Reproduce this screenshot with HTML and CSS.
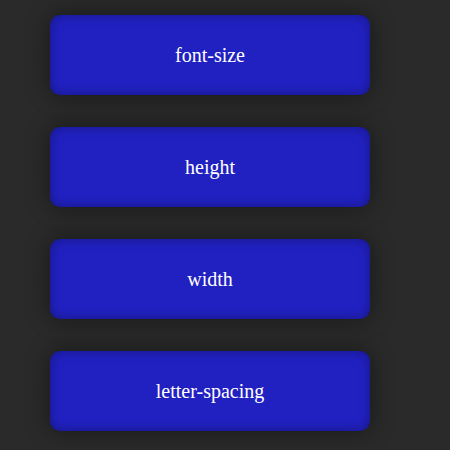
FILE: index.html
```html
<!DOCTYPE html>
<html>
<head>
<meta charset="utf-8">
<link rel="stylesheet" href="styles.css">
</head>
<body>
<div class="list">
  <div class="card">font-size</div>
  <div class="card">height</div>
  <div class="card">width</div>
  <div class="card">letter-spacing</div>
</div>
</body>
</html>
```
FILE: styles.css
```css
html, body {
  margin: 0;
  background: #2a2a2a;
  height: 100%;
}
.list {
  display: flex;
  flex-direction: column;
  gap: 32px;
  padding: 15px 0 0 50px;
}
.card {
  width: 320px;
  height: 80px;
  border-radius: 10px;
  background: #2121c2;
  color: #ffffff;
  font-family: "Liberation Serif", "Times New Roman", serif;
  font-size: 20px;
  display: flex;
  align-items: center;
  justify-content: center;
  box-shadow: 0 0 24px rgba(0, 0, 0, 0.45), inset 0 0 12px rgba(0, 0, 0, 0.35);
}
```
